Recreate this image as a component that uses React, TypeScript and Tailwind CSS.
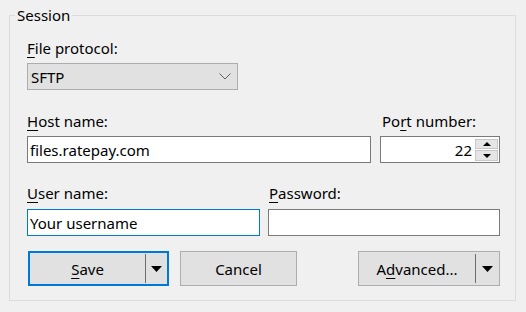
import React from "react";

const Arrow = ({ up = false, w = 11, h = 6 }: { up?: boolean; w?: number; h?: number }) => (
  <svg width={w} height={h} viewBox={`0 0 ${w} ${h}`}>
    <path d={up ? `M0 ${h}H${w}L${w / 2} 0z` : `M0 0H${w}L${w / 2} ${h}z`} fill="#000" />
  </svg>
);

const Label = ({ text, k, className = "" }: { text: string; k: number; className?: string }) => (
  <div className={"h-[20px] whitespace-nowrap " + className}>
    {text.slice(0, k)}
    <span className="underline underline-offset-[3px] decoration-1">{text[k]}</span>
    {text.slice(k + 1)}
  </div>
);

const TextBox = ({ value, focus = false }: { value: string; focus?: boolean }) => (
  <input
    readOnly
    value={value}
    className={
      "w-full h-[27px] bg-white px-[2px] outline-none border " +
      (focus ? "border-[#0078d7]" : "border-[#7a7a7a]")
    }
  />
);

const SplitButton = ({ label, k, primary = false }: { label: string; k: number; primary?: boolean }) => (
  <div
    className={
      "h-[35px] flex bg-[#e1e1e1] " +
      (primary ? "w-[141px] ml-[1px] border-2 border-[#0078d7]" : "w-[142px] ml-auto border border-[#adadad]")
    }
  >
    <div className="flex-1 flex items-center justify-center">
      <Label text={label} k={k} />
    </div>
    <div className="w-px h-[29px] self-center bg-[#6d6d6d]" />
    <div className={(primary ? "w-[21px]" : "w-[23px]") + " flex items-center justify-center"}>
      <Arrow />
    </div>
  </div>
);

export default function App() {
  return (
    <div className="w-[526px] h-[312px] bg-[#f0f0f0] pt-[5px] pl-[9px] font-['Noto_Sans',sans-serif] text-[15px] leading-[20px] text-black">
      <fieldset className="w-[507px] border border-[#dcdcdc]">
        <legend className="ml-[5px] px-[2px]">Session</legend>
        <div className="pl-[17px] pr-[15px] pt-[13px] pb-[14px]">
          <Label text="File protocol:" k={0} />
          <div className="mt-[5px] w-[211px] h-[27px] border border-[#adadad] bg-[#e1e1e1] flex items-center justify-between pl-[3px] pr-[6px]">
            <span>SFTP</span>
            <svg width="12" height="7" viewBox="0 0 12 7">
              <path d="M0.5 0.5L6 6L11.5 0.5" fill="none" stroke="#606060" strokeWidth="1" />
            </svg>
          </div>

          <div className="mt-[21px] flex gap-[9px]">
            <div className="w-[344px]">
              <Label text="Host name:" k={0} />
              <div className="mt-[5px]">
                <TextBox value="files.ratepay.com" />
              </div>
            </div>
            <div className="w-[120px]">
              <Label text="Port number:" k={2} className="pl-[2px]" />
              <div className="mt-[5px] h-[27px] flex border border-[#7a7a7a] bg-white">
                <input readOnly value="22" className="flex-1 min-w-0 text-right pr-[3px] outline-none bg-transparent" />
                <div className="w-[23px] mr-px mt-[2px] flex flex-col gap-px">
                  <div className="h-[10px] bg-[#e5e5e5] border border-[#c8c8c8] flex items-center justify-center">
                    <Arrow up w={8} h={4} />
                  </div>
                  <div className="h-[11px] bg-[#e5e5e5] border border-[#c8c8c8] flex items-center justify-center">
                    <Arrow w={8} h={4} />
                  </div>
                </div>
              </div>
            </div>
          </div>

          <div className="mt-[20px] flex gap-[8px]">
            <div className="w-[233px]">
              <Label text="User name:" k={0} />
              <div className="mt-[6px]">
                <TextBox value="Your username" focus />
              </div>
            </div>
            <div className="w-[232px]">
              <Label text="Password:" k={0} className="pl-[1px]" />
              <div className="mt-[6px]">
                <TextBox value="" />
              </div>
            </div>
          </div>

          <div className="mt-[15px] flex">
            <SplitButton label="Save" k={0} primary />
            <div className="ml-[11px] w-[117px] h-[35px] border border-[#adadad] bg-[#e1e1e1] flex items-center justify-center">
              Cancel
            </div>
            <SplitButton label="Advanced..." k={1} />
          </div>
        </div>
      </fieldset>
    </div>
  );
}
